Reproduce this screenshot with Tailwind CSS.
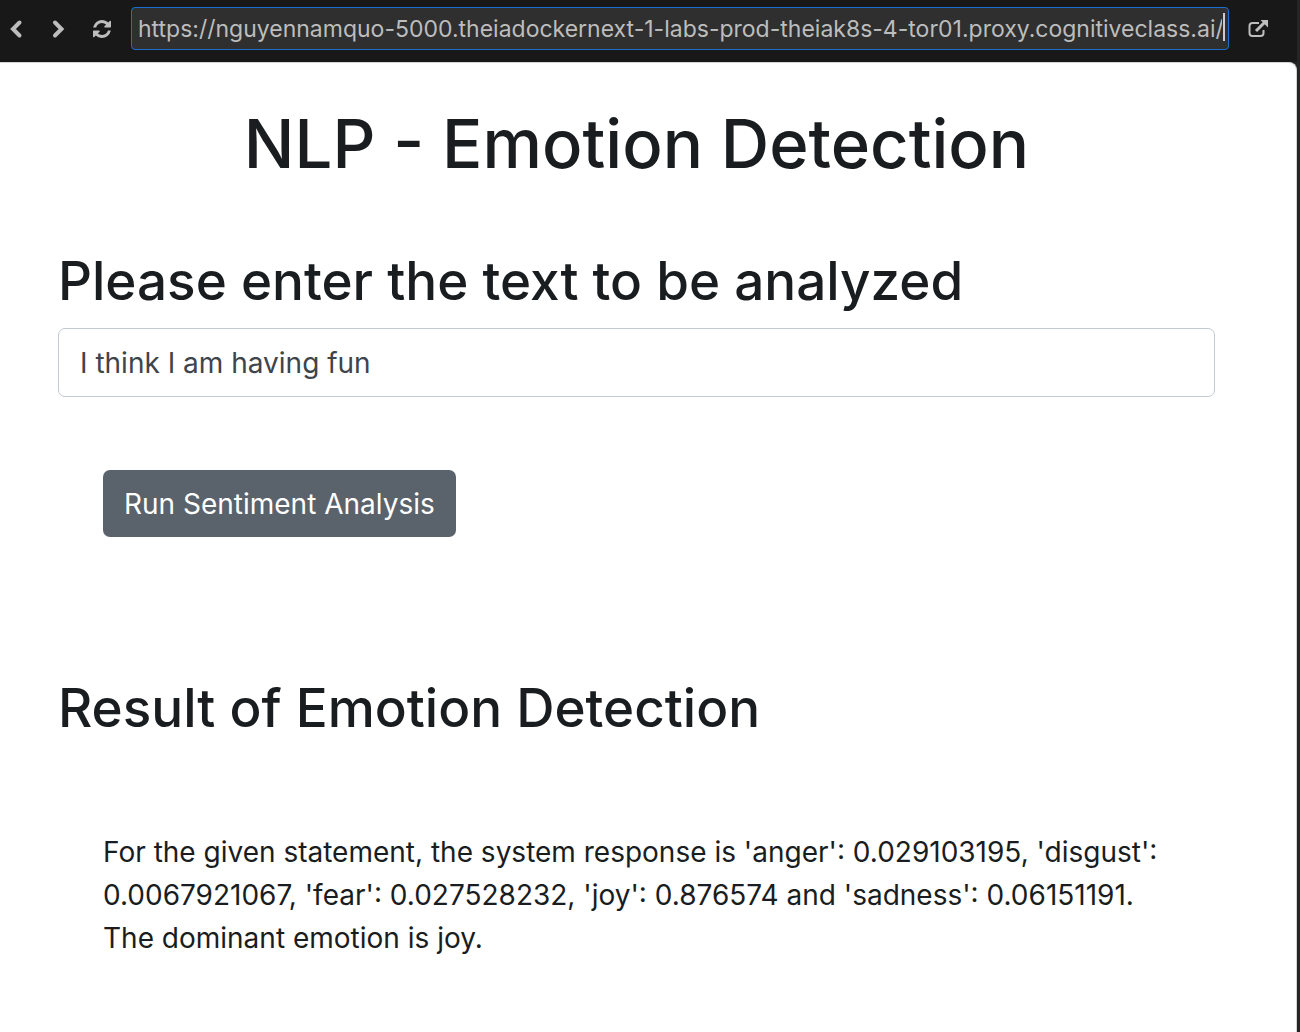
<!DOCTYPE html>
<html lang="en">
<head>
<meta charset="utf-8">
<title>NLP - Emotion Detection</title>
<script src="https://cdn.jsdelivr.net/npm/@tailwindcss/browser@4"></script>
</head>
<body class="min-h-screen flex flex-col bg-[#252525] font-['Inter',sans-serif] text-[#1a1d20]">
<header class="flex items-center h-[62px] mr-[3px] bg-[#181818] text-[#bdbdbd] pb-[5px] pr-[26px]">
  <button aria-label="Back" class="w-8 flex justify-center"><svg class="w-4 h-5" viewBox="0 0 16 20" fill="none" stroke="currentColor" stroke-width="4" stroke-linecap="round"><path d="M11.500 3.500 5 10l6.500 6.500"/></svg></button>
  <button aria-label="Forward" class="w-13 flex justify-center"><svg class="w-4 h-5" viewBox="0 0 16 20" fill="none" stroke="currentColor" stroke-width="4" stroke-linecap="round"><path d="M5 3.500 11.500 10 5 16.500"/></svg></button>
  <button aria-label="Reload" class="w-9 flex justify-center"><svg class="w-[18px] h-[18px]" viewBox="0 0 1536 1536" fill="currentColor"><path d="M1511 928q0 5-1 7-64 268-268 434.500T764 1536q-146 0-282.500-55T238 1324l-129 129q-19 19-45 19t-45-19-19-45V960q0-26 19-45t45-19h448q26 0 45 19t19 45-19 45l-137 137q71 66 161 102t187 36q134 0 250-65t186-179q11-17 53-117 8-23 30-23h192q13 0 22.500 9.500t9.500 22.500zm25-800v448q0 26-19 45t-45 19h-448q-26 0-45-19t-19-45 19-45l138-138Q969 256 768 256q-134 0-250 65T332 500q-11 17-53 117-8 23-30 23H50q-13 0-22.500-9.500T18 608v-7q65-268 270-434.500T768 0q146 0 284 55.500T1297 212l130-129q19-19 45-19t45 19 19 45z"/></svg></button>
  <div class="relative flex-1 min-w-0 ml-[11px]">
    <input aria-label="Address" class="block w-full h-[43px] px-[6px] rounded-[4px] border border-[#1a6fd0] bg-[#2f2f2f] text-[23px]" value="https://nguyennamquo-5000.theiadockernext-1-labs-prod-theiak8s-4-tor01.proxy.cognitiveclass.ai/">
    <span class="absolute right-1 top-[6px] w-[2px] h-7 bg-[#cccccc]"></span>
  </div>
  <a href="#" aria-label="Open in new window" class="ml-[18px] flex"><svg class="w-[24px] h-5" viewBox="0 0 24 20" fill="none" stroke="currentColor" stroke-width="2"><path d="M12 4H5.500A3 3 0 0 0 2.500 7v7a3 3 0 0 0 3 3h8a3 3 0 0 0 3-3v-3"/><path d="m9 12 9-9" stroke-width="3"/><path d="M13.500 1h7.500v7.500z" fill="currentColor" stroke="none"/></svg></a>
</header>
<main class="flex-1 mr-[3px] pl-[58px] pr-[81px] pt-9 bg-white border-t border-r border-[#d4d4d4] rounded-tr-lg">
  <h1 class="text-center font-medium text-[67px] leading-[90px]">NLP - Emotion Detection</h1>
  <label for="t" class="block font-medium text-[53px] leading-[68px] mt-[58px]">Please enter the text to be analyzed</label>
  <input id="t" class="block w-full h-[69px] mt-[13px] px-[21px] rounded-[7px] border border-[#c3c9d2] text-[#3e444b] text-[28px]" value="I think I am having fun">
  <button class="block h-[67px] mt-[73px] ml-[45px] px-[21px] rounded-[7px] bg-[#5a626c] text-white text-[28px]">Run Sentiment Analysis</button>
  <h2 class="font-medium text-[53px] leading-[68px] mt-[137px]">Result of Emotion Detection</h2>
  <p class="mt-[89px] mx-[45px] text-[28px] leading-[43px]">For the given statement, the system response is 'anger': 0.029103195, 'disgust': 0.0067921067, 'fear': 0.027528232, 'joy': 0.876574 and 'sadness': 0.06151191. The dominant emotion is joy.</p>
</main>
</body>
</html>
